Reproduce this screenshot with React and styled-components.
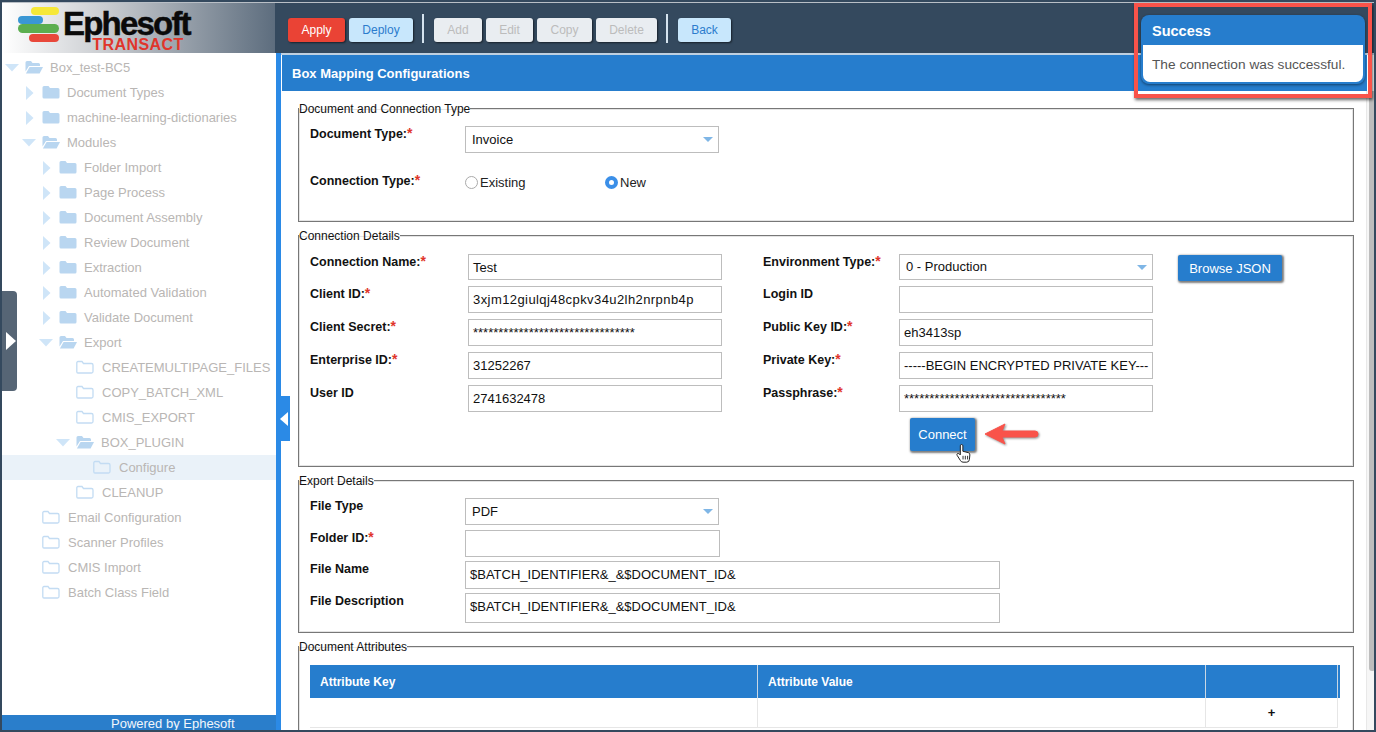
import React from "react";
import styled, { createGlobalStyle } from "styled-components";

const Global = createGlobalStyle`
  html, body { margin: 0; padding: 0; background: #fff; overflow: hidden; }
  * { box-sizing: border-box; }
  body { font-family: "Liberation Sans", Arial, sans-serif; font-size: 13px; color: #222; }
`;

const Frame = styled.div`
  position: relative;
  width: 1376px;
  height: 732px;
  border: 2px solid #34495e;
  display: flex;
  flex-direction: column;
  overflow: hidden;
  background: #fff;
`;
const TopLine = styled.div`
  height: 1px;
  background: #b9bfc6;
  flex: none;
`;
const Header = styled.header`
  display: flex;
  height: 50px;
  flex: none;
  background: #34495e;
`;
const LogoArea = styled.div`
  width: 273px;
  display: flex;
  padding: 3px 0 0 16px;
  background: linear-gradient(90deg, #fff 0%, #c9ccd0 38%, #5d6d7e 100%);
`;
const Wordmark = styled.div`
  display: flex;
  flex-direction: column;
  align-items: flex-end;
  margin-left: 1px;
`;
const Ephesoft = styled.div`
  font-size: 33px;
  font-weight: bold;
  line-height: 28px;
  letter-spacing: -1.8px;
  color: #0a0a0a;
  margin-top: 4px;
  -webkit-text-stroke: 0.5px #0a0a0a;
`;
const Transact = styled.div`
  font-size: 16px;
  font-weight: bold;
  line-height: 13px;
  letter-spacing: 0.45px;
  color: #e0352b;
  margin-right: 6px;
`;
const Toolbar = styled.div`
  display: flex;
  align-items: center;
  gap: 4px;
  padding: 4px 0 0 13px;
`;
const ToolButton = styled.button`
  height: 24px;
  width: ${(p) => p.$w}px;
  padding: 0;
  border: 0;
  border-radius: 3px;
  font: 12px "Liberation Sans", Arial, sans-serif;
  box-shadow: 1px 1px 2px rgba(0, 0, 0, 0.55);
  background: ${(p) => (p.$kind === "red" ? "#ea4335" : p.$kind === "off" ? "#e9edf1" : "#c8e7fc")};
  color: ${(p) => (p.$kind === "red" ? "#fff" : p.$kind === "off" ? "#bcbcbc" : "#2b7ccd")};
`;
const Divider = styled.span`
  width: 2px;
  height: 29px;
  margin: -4px 6px 0 5px;
  background: #d5e3ee;
`;

const Body = styled.div`
  flex: 1;
  min-height: 0;
  display: flex;
`;
const Sidebar = styled.aside`
  width: 274px;
  flex: none;
  display: flex;
  flex-direction: column;
`;
const Tree = styled.ul`
  flex: 1;
  margin: 0;
  padding: 2px 0 0;
  list-style: none;
`;
const TreeRow = styled.li`
  height: 25px;
  display: flex;
  align-items: center;
  padding-left: ${(p) => p.$indent}px;
  background: ${(p) => (p.$active ? "#eaf2f9" : "transparent")};
  color: #b9b6b4;
  font-size: 13px;
  white-space: nowrap;
`;
const Twisty = styled.span`
  width: 20px;
  flex: none;
  display: flex;
  align-items: center;
  padding-left: ${(p) => (p.$open ? 0 : 4)}px;
`;
const TreeIcon = styled.svg`
  width: 18px;
  height: 15px;
  flex: none;
  margin-right: ${(p) => (p.$line ? 8 : 7)}px;
`;
const Footer = styled.footer`
  height: 15px;
  flex: none;
  padding-left: 109px;
  background: #2a7ecb;
  color: #f2f6fb;
  font-size: 13px;
  line-height: 18px;
  white-space: nowrap;
`;
const Strip = styled.div`
  width: 5px;
  flex: none;
  background: #2b8ae6;
`;
const DrawerTab = styled.div`
  position: absolute;
  left: 0;
  top: 289px;
  width: 15px;
  height: 100px;
  border-radius: 0 4px 4px 0;
  background: #566575;
  display: flex;
  align-items: center;
  padding-left: 4px;
`;
const CollapseTab = styled.div`
  position: absolute;
  left: 276px;
  top: 394px;
  width: 12px;
  height: 45px;
  background: #2b8ae6;
  display: flex;
  align-items: center;
  padding-left: 2px;
`;

const Main = styled.main`
  flex: 1;
  min-width: 0;
  display: flex;
  flex-direction: column;
  padding-left: 1px;
  background: #fff;
`;
const RuleLine = styled.div`
  height: 2px;
  flex: none;
  margin-left: -1px;
  background: #bfd0e0;
`;
const TitleBar = styled.div`
  height: 36px;
  flex: none;
  display: flex;
  align-items: center;
  padding-left: 10px;
  margin-right: 7px;
  background: #267dcd;
  color: #fff;
  font-size: 13px;
  font-weight: bold;
`;
const ContentRow = styled.div`
  flex: 1;
  min-height: 0;
  display: flex;
`;
const Panel = styled.div`
  width: 1072px;
  flex: none;
  padding: 9px 0 0 16px;
  display: flex;
  flex-direction: column;
  gap: 5px;
`;
const Box = styled.fieldset`
  margin: 0;
  padding: ${(p) => p.$top ?? 10}px 0 0 11px;
  width: 1056px;
  height: ${(p) => p.$h}px;
  flex: none;
  border: 1px solid #777;
  box-shadow: inset 0 0 0 1px #e4e4e4;
`;
const Legend = styled.legend`
  padding: 2px 0 0;
  margin-left: -11px;
  font-size: 12px;
  line-height: 14px;
  color: #111;
`;
const FormGrid = styled.div`
  display: grid;
  grid-template-columns: ${(p) => p.$cols};
  grid-template-rows: ${(p) => p.$rows || "none"};
  grid-auto-rows: 27px;
  row-gap: ${(p) => p.$gap ?? 6}px;
  align-items: start;
`;
const Label = styled.label`
  font-size: 12.5px;
  font-weight: bold;
  line-height: 16px;
  color: #111;
  white-space: nowrap;
  margin-top: ${(p) => p.$nudge || 0}px;
`;
const Star = styled.span`
  color: #e0352b;
  font-size: 14px;
  line-height: 14px;
`;
const Input = styled.div`
  height: ${(p) => p.$h || 27}px;
  width: ${(p) => p.$w || 254}px;
  border: 1px solid #bdbdbd;
  padding: 0 4px;
  font-size: 13px;
  line-height: 26px;
  letter-spacing: ${(p) => p.$track || 0}px;
  color: #111;
  overflow: hidden;
  white-space: nowrap;
`;
const Select = styled(Input)`
  display: flex;
  justify-content: space-between;
  align-items: center;
  padding: 0 5px 0 6px;
`;
const Caret = styled.span`
  width: 0;
  height: 0;
  border-left: 5px solid transparent;
  border-right: 5px solid transparent;
  border-top: 5px solid #7fb6e6;
`;
const RadioRow = styled.div`
  display: flex;
  align-items: center;
  margin-top: 5px;
`;
const RadioOption = styled.span`
  width: 140px;
  flex: none;
  display: flex;
  align-items: center;
  gap: 2px;
  font-size: 13px;
  color: #222;
`;
const RadioDot = styled.span`
  width: 13px;
  height: 13px;
  flex: none;
  border-radius: 50%;
  border: ${(p) => (p.$on ? "4.5px solid #3b8fe8" : "1px solid #aaa")};
  background: #fff;
`;
const BlueButton = styled.button`
  height: ${(p) => p.$h}px;
  width: ${(p) => p.$w}px;
  margin-top: ${(p) => p.$top || 0}px;
  padding: 0;
  border: 0;
  border-radius: 2px;
  background: #267dcd;
  color: #fff;
  font: 13px "Liberation Sans", Arial, sans-serif;
  box-shadow: 1px 1px 2px 1px rgba(40, 40, 40, 0.6);
`;
const ConnectWrap = styled.div`
  position: relative;
  margin: 6px 0 0 600px;
  width: 65px;
`;
const ArrowMark = styled.svg`
  position: absolute;
  left: 74px;
  top: 1px;
  width: 58px;
  height: 30px;
  filter: drop-shadow(1px 1px 1px rgba(0, 0, 0, 0.45));
`;
const HandMark = styled.svg`
  position: absolute;
  left: 45px;
  top: 26px;
  width: 17px;
  height: 20px;
`;
const AttrTable = styled.div`
  width: 1030px;
  margin-top: 1px;
  display: grid;
  grid-template-columns: 448px 448px 132px 2px;
`;
const HeadCell = styled.div`
  height: 33px;
  padding-left: 10px;
  display: flex;
  align-items: center;
  background: #267dcd;
  color: #fff;
  font-size: 12px;
  font-weight: bold;
  border-right: 1px solid #c9d7e4;
`;
const HeadSliver = styled.div`
  height: 33px;
  background: #267dcd;
`;
const BodyCell = styled.div`
  height: 30px;
  display: flex;
  align-items: center;
  justify-content: center;
  border-right: 1px solid #e6e6e6;
  border-bottom: 1px solid #e6e6e6;
  font-size: 13px;
  font-weight: bold;
  color: #111;
`;
const Scrollbar = styled.div`
  flex: 1;
  background: #f6f6f6;
  border-left: 1px solid #e8e8e8;
  margin-left: 12px;
`;
const Thumb = styled.div`
  width: 6px;
  height: 580px;
  margin-left: 2px;
  border-radius: 0 0 3px 3px;
  background: #bdbdbd;
`;
const Notice = styled.div`
  position: absolute;
  left: 1132px;
  top: 1px;
  width: 238px;
  height: 95px;
  border: 4px solid #f9534a;
  box-shadow: 1px 2px 3px rgba(0, 0, 0, 0.6);
  padding: 8px 3px 0;
`;
const NoticeCard = styled.div`
  height: 69px;
  background: #267dcd;
  border-radius: 8px;
  padding: 0 2px 2px;
  box-shadow: 0 1px 3px rgba(0, 0, 0, 0.5);
  display: flex;
  flex-direction: column;
`;
const NoticeTitle = styled.div`
  height: 30px;
  padding: 1px 0 0 9px;
  display: flex;
  align-items: center;
  color: #fff;
  font-size: 14.5px;
  font-weight: bold;
`;
const NoticeBody = styled.div`
  flex: 1;
  background: #fff;
  border-radius: 0 0 7px 7px;
  padding: 12px 0 0 9px;
  font-size: 13.7px;
  color: #555;
  white-space: nowrap;
`;

const treeItems = [
  { text: "Box_test-BC5", indent: 3, state: "open", icon: "open" },
  { text: "Document Types", indent: 20, state: "closed", icon: "full" },
  { text: "machine-learning-dictionaries", indent: 20, state: "closed", icon: "full" },
  { text: "Modules", indent: 20, state: "open", icon: "open" },
  { text: "Folder Import", indent: 37, state: "closed", icon: "full" },
  { text: "Page Process", indent: 37, state: "closed", icon: "full" },
  { text: "Document Assembly", indent: 37, state: "closed", icon: "full" },
  { text: "Review Document", indent: 37, state: "closed", icon: "full" },
  { text: "Extraction", indent: 37, state: "closed", icon: "full" },
  { text: "Automated Validation", indent: 37, state: "closed", icon: "full" },
  { text: "Validate Document", indent: 37, state: "closed", icon: "full" },
  { text: "Export", indent: 37, state: "open", icon: "open" },
  { text: "CREATEMULTIPAGE_FILES", indent: 74, icon: "line" },
  { text: "COPY_BATCH_XML", indent: 74, icon: "line" },
  { text: "CMIS_EXPORT", indent: 74, icon: "line" },
  { text: "BOX_PLUGIN", indent: 54, state: "open", icon: "open" },
  { text: "Configure", indent: 91, icon: "line", active: true },
  { text: "CLEANUP", indent: 74, icon: "line" },
  { text: "Email Configuration", indent: 40, icon: "line" },
  { text: "Scanner Profiles", indent: 40, icon: "line" },
  { text: "CMIS Import", indent: 40, icon: "line" },
  { text: "Batch Class Field", indent: 40, icon: "line" },
];

const FolderIcon = ({ kind }) => (
  <TreeIcon viewBox="0 0 18 15" $line={kind === "line"}>
    {kind === "full" && (
      <path d="M2 1h4.500l1.500 2h8a1.500 1.500 0 0 1 1.500 1.500V12a1.500 1.500 0 0 1-1.500 1.500H2A1.500 1.500 0 0 1 .5 12V2.500A1.500 1.500 0 0 1 2 1z" fill="#b9d6f0" />
    )}
    {kind === "line" && (
      <path d="M2 1.500h4l1.500 2H15.500a1.500 1.500 0 0 1 1.500 1.500v6.500a1.500 1.500 0 0 1-1.500 1.500H2a1.200 1.200 0 0 1-1.200-1.200V2.700A1.200 1.200 0 0 1 2 1.500z" fill="none" stroke="#c3dcf3" strokeWidth="1.300" />
    )}
    {kind === "open" && (
      <g fill="#b9d6f0">
        <path d="M.5 2.500A1.500 1.500 0 0 1 2 1h4l1.500 2h6A1.500 1.500 0 0 1 15 4.500V6H4L.5 11.500z" />
        <path d="M4.600 7H18l-3.400 6.500H.9z" />
      </g>
    )}
  </TreeIcon>
);

const Triangle = ({ open }) =>
  open ? (
    <svg width="14" height="8" viewBox="0 0 14 8"><path d="M0 0h14L7 7.500z" fill="#cfe5f8" /></svg>
  ) : (
    <svg width="8" height="14" viewBox="0 0 8 14"><path d="M0 0l7.500 7L0 14z" fill="#cfe5f8" /></svg>
  );

const Req = ({ children, nudge }) => (
  <Label $nudge={nudge}>
    {children}
    <Star>*</Star>
  </Label>
);

const App = () => {
  return (
    <Frame>
      <Global />
      <TopLine />
      <Header>
        <LogoArea>
          <svg width="44" height="38" viewBox="0 0 44 38" style={{ flex: "none" }}>
            <rect x="13" y="1" width="28" height="8" rx="4" fill="#f6e838" />
            <rect x="0" y="10" width="25" height="8" rx="4" fill="#3a97d4" />
            <rect x="0" y="18" width="41" height="9" rx="4.5" fill="#5cae4f" />
            <rect x="11" y="28" width="30" height="8" rx="4" fill="#e8483a" />
          </svg>
          <Wordmark>
            <Ephesoft>Ephesoft</Ephesoft>
            <Transact>TRANSACT</Transact>
          </Wordmark>
        </LogoArea>
        <Toolbar>
          <ToolButton $kind="red" $w={57}>Apply</ToolButton>
          <ToolButton $w={64}>Deploy</ToolButton>
          <Divider />
          <ToolButton $kind="off" $w={48}>Add</ToolButton>
          <ToolButton $kind="off" $w={47}>Edit</ToolButton>
          <ToolButton $kind="off" $w={55}>Copy</ToolButton>
          <ToolButton $kind="off" $w={61}>Delete</ToolButton>
          <Divider />
          <ToolButton $w={53}>Back</ToolButton>
        </Toolbar>
      </Header>
      <Body>
        <Sidebar>
          <Tree>
            {treeItems.map((item) => (
              <TreeRow key={item.text} $indent={item.indent} $active={item.active}>
                {item.state && (
                  <Twisty $open={item.state === "open"}>
                    <Triangle open={item.state === "open"} />
                  </Twisty>
                )}
                <FolderIcon kind={item.icon} />
                {item.text}
              </TreeRow>
            ))}
          </Tree>
          <Footer>Powered by Ephesoft</Footer>
        </Sidebar>
        <Strip />
        <Main>
          <RuleLine />
          <TitleBar>Box Mapping Configurations</TitleBar>
          <ContentRow>
            <Panel>
              <Box $h={122}>
                <Legend>Document and Connection Type</Legend>
                <FormGrid $cols="155px 254px" $gap={17}>
                  <Req>Document Type:</Req>
                  <Select>
                    Invoice
                    <Caret />
                  </Select>
                  <Req nudge={3}>Connection Type:</Req>
                  <RadioRow>
                    <RadioOption>
                      <RadioDot />
                      Existing
                    </RadioOption>
                    <RadioOption>
                      <RadioDot $on />
                      New
                    </RadioOption>
                  </RadioRow>
                </FormGrid>
              </Box>
              <Box $h={240} $top={11}>
                <Legend>Connection Details</Legend>
                <FormGrid $cols="158px 254px 41px 136px 254px 25px 104px" $rows="26px">
                  <Req>Connection Name:</Req>
                  <Input $h={26}>Test</Input>
                  <span />
                  <Req>Environment Type:</Req>
                  <Select $h={26}>
                    0 - Production
                    <Caret />
                  </Select>
                  <span />
                  <BlueButton $w={104} $h={26} $top={1}>Browse JSON</BlueButton>

                  <Req>Client ID:</Req>
                  <Input $track={0.42}>3xjm12giulqj48cpkv34u2lh2nrpnb4p</Input>
                  <span />
                  <Label>Login ID</Label>
                  <Input />
                  <span />
                  <span />

                  <Req>Client Secret:</Req>
                  <Input>********************************</Input>
                  <span />
                  <Req>Public Key ID:</Req>
                  <Input>eh3413sp</Input>
                  <span />
                  <span />

                  <Req>Enterprise ID:</Req>
                  <Input>31252267</Input>
                  <span />
                  <Req>Private Key:</Req>
                  <Input>-----BEGIN ENCRYPTED PRIVATE KEY---</Input>
                  <span />
                  <span />

                  <Label>User ID</Label>
                  <Input>2741632478</Input>
                  <span />
                  <Req>Passphrase:</Req>
                  <Input>********************************</Input>
                  <span />
                  <span />
                </FormGrid>
                <ConnectWrap>
                  <BlueButton $w={65} $h={33}>Connect</BlueButton>
                  <ArrowMark viewBox="0 0 58 30">
                    <path d="M1 15L21 5l-3 7h33a3 3 0 0 1 0 6H18l3 7z" fill="#f9534a" stroke="#f9534a" strokeLinejoin="round" />
                  </ArrowMark>
                  <HandMark viewBox="0 0 17 22">
                    <path d="M5 2a1.400 1.400 0 0 1 2.800 0v6l6 1.500q1.800.5 1.700 2.500L15 17q-.3 3-3 3H8q-2 0-3-2L1.500 12.500q-.8-1.500.5-2t2.500 1L5 12z" fill="#fff" stroke="#222" strokeWidth="1.100" strokeLinejoin="round" />
                    <path d="M8 13v4M10.500 13v4M13 13v4" stroke="#222" strokeWidth="1" />
                  </HandMark>
                </ConnectWrap>
              </Box>
              <Box $h={161}>
                <Legend>Export Details</Legend>
                <FormGrid $cols="155px auto" $rows="27px 26px" $gap={5}>
                  <Label>File Type</Label>
                  <Select>
                    PDF
                    <Caret />
                  </Select>
                  <Req>Folder ID:</Req>
                  <Input $w={255} />
                  <Label>File Name</Label>
                  <Input $w={535} $h={28}>$BATCH_IDENTIFIER&amp;_&amp;$DOCUMENT_ID&amp;</Input>
                  <Label>File Description</Label>
                  <Input $w={535} $h={30}>$BATCH_IDENTIFIER&amp;_&amp;$DOCUMENT_ID&amp;</Input>
                </FormGrid>
              </Box>
              <Box $h={120}>
                <Legend>Document Attributes</Legend>
                <AttrTable>
                  <HeadCell>Attribute Key</HeadCell>
                  <HeadCell>Attribute Value</HeadCell>
                  <HeadCell />
                  <HeadSliver />
                  <BodyCell />
                  <BodyCell />
                  <BodyCell>+</BodyCell>
                </AttrTable>
              </Box>
            </Panel>
            <Scrollbar>
              <Thumb />
            </Scrollbar>
          </ContentRow>
        </Main>
      </Body>
      <DrawerTab>
        <svg width="11" height="18" viewBox="0 0 11 18"><path d="M0 0l10 9-10 9z" fill="#fff" /></svg>
      </DrawerTab>
      <CollapseTab>
        <svg width="9" height="14" viewBox="0 0 9 14"><path d="M8 0L0 7l8 7z" fill="#fff" /></svg>
      </CollapseTab>
      <Notice>
        <NoticeCard>
          <NoticeTitle>Success</NoticeTitle>
          <NoticeBody>The connection was successful.</NoticeBody>
        </NoticeCard>
      </Notice>
    </Frame>
  );
};

export default App;
